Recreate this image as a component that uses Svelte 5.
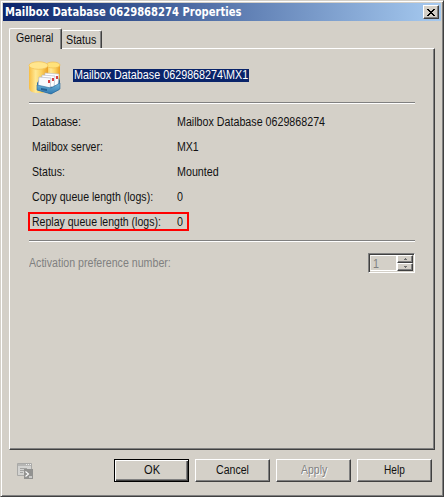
<script>
  const rows = [
    { label: 'Database:', lw: 49, value: 'Mailbox Database 0629868274', vw: 148 },
    { label: 'Mailbox server:', lw: 71, value: 'MX1', vw: 22 },
    { label: 'Status:', lw: 33, value: 'Mounted', vw: 42 },
    { label: 'Copy queue length (logs):', lw: 121, value: '0', vw: 6 },
    { label: 'Replay queue length (logs):', lw: 129, value: '0', vw: 6, marked: true }
  ];

  // Narrows a line of text to the width of the classic dialog font.
  function fit(node, width) {
    const natural = node.offsetWidth;
    node.style.width = width + 'px';
    node.firstElementChild.style.transform = `scaleX(${width / natural})`;
  }
</script>

{#snippet txt(text, width)}
  <span class="fit" use:fit={width}><span>{text}</span></span>
{/snippet}

<div class="window">
  <header>
    <span class="title">{@render txt('Mailbox Database 0629868274 Properties', 236)}</span>
    <button class="close" aria-label="Close">
      <svg width="8" height="7" viewBox="0 0 8 7" shape-rendering="crispEdges"><path d="M0 0h2v1h1v1h2V1h1V0h2v1H7v1H6v1H5v1h1v1h1v1h1v1H6V6H5V5H3v1H2v1H0V6h1V5h1V4h1V3H2V2H1V1H0z" /></svg>
    </button>
  </header>

  <nav>
    <div class="tab active">{@render txt('General', 37)}</div>
    <div class="tab">{@render txt('Status', 30)}</div>
  </nav>

  <main>
    <div class="heading">
      <svg class="db" width="34" height="34" viewBox="0 0 34 34">
        <defs>
          <linearGradient id="gold"><stop stop-color="#f8bd42" /><stop offset=".35" stop-color="#ffe995" /><stop offset=".65" stop-color="#fbd260" /><stop offset="1" stop-color="#ea9f24" /></linearGradient>
          <linearGradient id="tray" x2="0" y2="1"><stop stop-color="#75b8dc" /><stop offset="1" stop-color="#2f78b0" /></linearGradient>
        </defs>
        <path d="M18 4v22h14V4z" fill="url(#gold)" />
        <ellipse cx="25" cy="4" rx="7" ry="3" fill="#ffe27a" stroke="#efbd50" stroke-width=".7" />
        <path d="M1 4v23q0 5 9.500 5t9.500-5V4z" fill="url(#gold)" />
        <ellipse cx="10.500" cy="4.500" rx="9.500" ry="3.800" fill="#ffe68e" stroke="#f3c35a" stroke-width=".8" />
        <path d="M9 22l2-3 20-2 1 3-1 9-8 4-14-4z" fill="#286a9e" />
        <path d="M17 12l14 1-1 12-14-1z" fill="#fff" stroke="#b4b9c7" stroke-width=".6" />
        <path d="M14 14l13 1-1 11-13-1z" fill="#fff" stroke="#a9afc0" stroke-width=".6" />
        <path d="M11 16l12 1-1 11-12-2z" fill="#f8f9fc" stroke="#a9afc0" stroke-width=".6" />
        <path d="M28 15h2v3h-2zM24 17h2v3h-2zM20 19h2v3h-2z" fill="#d94343" />
        <path d="M9 24l14 3 9-5v6l-9 5-14-4z" fill="url(#tray)" stroke="#28699c" stroke-width=".6" />
        <path d="M13 27l6 1v2l-6-1z" fill="#245f94" />
      </svg>
      <span class="selected">{@render txt('Mailbox Database 0629868274\\MX1', 174)}</span>
    </div>
    <hr />
    <div class="rows">
      {#each rows as row}
        <div class="row" class:marked={row.marked}>
          <span class="label">{@render txt(row.label, row.lw)}</span>
          {@render txt(row.value, row.vw)}
        </div>
      {/each}
    </div>
    <hr />
    <div class="preference">
      {@render txt('Activation preference number:', 142)}
      <div class="spinner">
        <span class="number">{@render txt('1', 6)}</span>
        <div class="arrows">
          <i><svg width="3" height="2" viewBox="0 0 3 2" shape-rendering="crispEdges"><path d="M1 0h1v1h1v1H0V1h1z" /></svg></i>
          <i><svg width="3" height="2" viewBox="0 0 3 2" shape-rendering="crispEdges"><path d="M0 0h3v1H2v1H1V1H0z" /></svg></i>
        </div>
      </div>
    </div>
  </main>

  <footer>
    <svg width="17" height="17" viewBox="0 0 17 17">
      <path d="M.5.500h14v12H.5z" fill="#d3d3d1" stroke="#a9a9a7" />
      <path d="M1 1h13v2H1z" fill="#b6b6b4" />
      <path d="M9 1.500h1m1 0h1m1 0h1" stroke="#eee" />
      <path d="M3 5.500h7M3 7.500h5M3 9.500h3" stroke="#a3a3a1" />
      <path d="M7 6h9v10H7z" fill="#929290" />
      <path d="M8.500 8.500l3 2.500-3 2.500M12 14h3" fill="none" stroke="#fff" stroke-width="1.100" />
    </svg>
    <div class="buttons">
      <button class="btn default">{@render txt('OK', 16)}</button>
      <button class="btn">{@render txt('Cancel', 33)}</button>
      <button class="btn off">{@render txt('Apply', 26)}</button>
      <button class="btn">{@render txt('Help', 21)}</button>
    </div>
  </footer>
</div>

<style>
  :global(body) { background: #d4d0c8; }
  .window {
    box-sizing: border-box; width: 444px; height: 497px;
    display: flex; flex-direction: column;
    padding: 1px 0 0 1px;
    background: #d4d0c8; color: #111;
    font: 12.5px/14px "Liberation Sans", Arial, sans-serif;
    border: 1px solid; border-color: #d4d0c8 #404040 #404040 #d4d0c8;
    box-shadow: inset 1px 1px #fff, inset -1px -1px #808080;
  }
  .fit { display: inline-block; white-space: nowrap; text-align: left; vertical-align: top; }
  .fit > span { display: inline-block; transform-origin: 0 0; }
  header {
    flex: none; height: 18px; margin: 1px 2px 0 1px; padding: 0 2px;
    display: flex; align-items: center; justify-content: space-between;
    background: linear-gradient(90deg, #0a246a, #a6caf0);
  }
  .title { color: #fff; font: bold 12px/14px "DejaVu Sans", sans-serif; }
  button { padding: 0; background: #d4d0c8; border-radius: 0; color: #111; font: inherit; }
  .close {
    width: 16px; height: 14px; display: flex; align-items: center; justify-content: center;
    border: 1px solid; border-color: #fff #404040 #404040 #fff;
    box-shadow: inset -1px -1px #808080;
  }
  nav { display: flex; align-items: flex-end; flex: none; height: 27px; margin-left: 7px; }
  .tab {
    box-sizing: border-box; height: 18px; width: 40px; padding: 2px 0 0 4px;
    border: 1px solid; border-color: #fff #404040 transparent #fff; border-bottom: 0; border-left: 0;
    border-radius: 2px 2px 0 0; box-shadow: inset -1px 0 #808080;
  }
  .tab.active {
    width: 53px; height: 21px; padding: 2px 0 0 6px; margin-bottom: -1px;
    border-left: 1px solid #fff; background: #d4d0c8; position: relative;
  }
  main {
    box-sizing: border-box; flex: none; width: 426px; height: 402px; margin-left: 7px;
    padding: 12px 19px 0; border: 1px solid; border-color: #fff #404040 #404040 #fff;
    box-shadow: inset -1px -1px #808080;
  }
  .heading { display: flex; height: 41px; }
  .db { flex: none; margin: 0 11px 0 -1px; }
  .selected { height: 13px; line-height: 13px; margin-top: 8px; padding: 0 1px; background: #0a246a; color: #fff; }
  hr { width: 386px; height: 1px; margin: 0; border: 0; background: #808080; border-bottom: 1px solid #fff; }
  .rows { padding-top: 6px; height: 130px; }
  .row { box-sizing: border-box; height: 25px; padding: 5px 0 0 3px; display: flex; }
  .label { width: 145px; flex: none; }
  .marked { width: 161px; height: 19px; margin: 2px 0 0 -1px; padding: 1px 0 0 2px; border: 2px solid #f00; }
  .preference { display: flex; justify-content: space-between; padding-top: 11px; width: 386px; color: #808080; }
  .preference > .fit { margin-top: 3px; }
  .spinner {
    box-sizing: border-box; width: 47px; height: 20px; display: flex; padding: 1px;
    border: 1px solid; border-color: #808080 #fff #fff #808080;
    box-shadow: inset 1px 1px #404040, inset -1px -1px #d4d0c8;
  }
  .number { box-sizing: border-box; width: 27px; height: 16px; padding: 1px 0 0 2px; border: 1px solid #fff; border-left-color: #ece9e3; }
  .arrows { flex: 1; display: flex; flex-direction: column; }
  .arrows i {
    flex: 1; display: flex; align-items: center; justify-content: center;
    border: 1px solid; border-color: #fff #404040 #404040 #fff; box-shadow: inset -1px -1px #808080;
  }
  .arrows svg { fill: #707070; }
  footer { display: flex; justify-content: space-between; padding: 9px 11px 0 15px; }
  footer > svg { margin-top: 4px; }
  .buttons { display: flex; gap: 6px; }
  .btn {
    box-sizing: border-box; width: 75px; height: 23px; padding-bottom: 1px;
    border: 1px solid; border-color: #fff #404040 #404040 #fff;
    box-shadow: inset -1px -1px #808080;
  }
  .default { border-color: #000; box-shadow: inset 1px 1px #fff, inset -1px -1px #404040, inset -2px -2px #808080; }
  .off { color: #808080; text-shadow: 1px 1px #fff; }
</style>
